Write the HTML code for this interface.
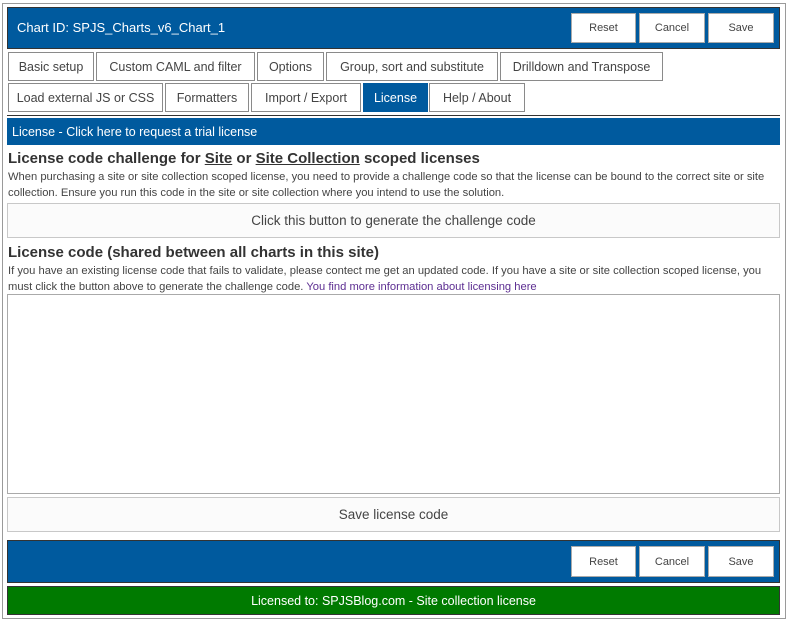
<!DOCTYPE html>
<html><head><meta charset="utf-8"><style>
*{box-sizing:border-box;margin:0;padding:0}
body{width:789px;height:622px;background:#fff;font-family:"Liberation Sans",sans-serif;color:#444;position:relative;overflow:hidden}
.a{position:absolute}
.outer{left:2px;top:3px;width:784px;height:616px;border:1px solid #9a9a9a}
.blue{background:#005a9e}
.btn{position:absolute;background:#fff;border:1px solid #aaa;font-size:11px;color:#444;display:flex;align-items:center;justify-content:center}
.tab{position:absolute;background:#fff;border:1px solid #8a8a8a;font-size:12.5px;color:#444;display:flex;align-items:center;justify-content:center;height:29px}
.big{position:absolute;left:7px;width:773px;background:#fbfbfb;border:1px solid #c8c8c8;font-size:13.5px;color:#444;display:flex;align-items:center;justify-content:center}
h3{position:absolute;left:8px;font-size:15px;font-weight:bold;color:#333}
p{position:absolute;left:8px;width:775px;font-size:11.2px;line-height:16px;color:#444}
</style></head><body>
<div class="a outer"></div>
<div class="a blue" style="left:7px;top:7px;width:773px;height:42px;border:1px solid #333"></div>
<div class="a" style="left:17px;top:20px;color:#fff;font-size:13px">Chart ID: SPJS_Charts_v6_Chart_1</div>
<div class="btn" style="left:571px;top:13px;width:65px;height:30px">Reset</div>
<div class="btn" style="left:639px;top:13px;width:66px;height:30px">Cancel</div>
<div class="btn" style="left:708px;top:13px;width:66px;height:30px">Save</div>

<div class="tab" style="left:8px;top:52px;width:86px">Basic setup</div>
<div class="tab" style="left:96px;top:52px;width:159px">Custom CAML and filter</div>
<div class="tab" style="left:257px;top:52px;width:67px">Options</div>
<div class="tab" style="left:326px;top:52px;width:172px">Group, sort and substitute</div>
<div class="tab" style="left:500px;top:52px;width:163px">Drilldown and Transpose</div>
<div class="tab" style="left:8px;top:83px;width:155px">Load external JS or CSS</div>
<div class="tab" style="left:165px;top:83px;width:84px">Formatters</div>
<div class="tab" style="left:251px;top:83px;width:110px">Import / Export</div>
<div class="tab" style="left:363px;top:83px;width:65px;background:#005a9e;color:#fff;border-color:#005a9e">License</div>
<div class="tab" style="left:429px;top:83px;width:96px">Help / About</div>
<div class="a" style="left:7px;top:115px;width:773px;height:1px;background:#333"></div>

<div class="a blue" style="left:7px;top:118px;width:773px;height:27px"></div>
<div class="a" style="left:12px;top:125px;color:#fff;font-size:12.5px">License - Click here to request a trial license</div>

<h3 style="top:150px">License code challenge for <u>Site</u> or <u>Site Collection</u> scoped licenses</h3>
<p style="top:169px">When purchasing a site or site collection scoped license, you need to provide a challenge code so that the license can be bound to the correct site or site collection. Ensure you run this code in the site or site collection where you intend to use the solution.</p>
<div class="big" style="top:203px;height:35px">Click this button to generate the challenge code</div>

<h3 style="top:244px">License code (shared between all charts in this site)</h3>
<p style="top:263px">If you have an existing license code that fails to validate, please contect me get an updated code. If you have a site or site collection scoped license, you must click the button above to generate the challenge code. <span style="color:#5c2d91">You find more information about licensing here</span></p>
<div class="a" style="left:7px;top:294px;width:773px;height:200px;border:1px solid #aaa"></div>
<div class="big" style="top:497px;height:35px">Save license code</div>

<div class="a blue" style="left:7px;top:540px;width:773px;height:43px;border:1px solid #333"></div>
<div class="btn" style="left:571px;top:546px;width:65px;height:31px">Reset</div>
<div class="btn" style="left:639px;top:546px;width:66px;height:31px">Cancel</div>
<div class="btn" style="left:708px;top:546px;width:66px;height:31px">Save</div>
<div class="a" style="left:7px;top:586px;width:773px;height:29px;background:#007a00;border:1px solid #333;color:#fff;font-size:12.5px;display:flex;align-items:center;justify-content:center">Licensed to: SPJSBlog.com - Site collection license</div>
</body></html>
